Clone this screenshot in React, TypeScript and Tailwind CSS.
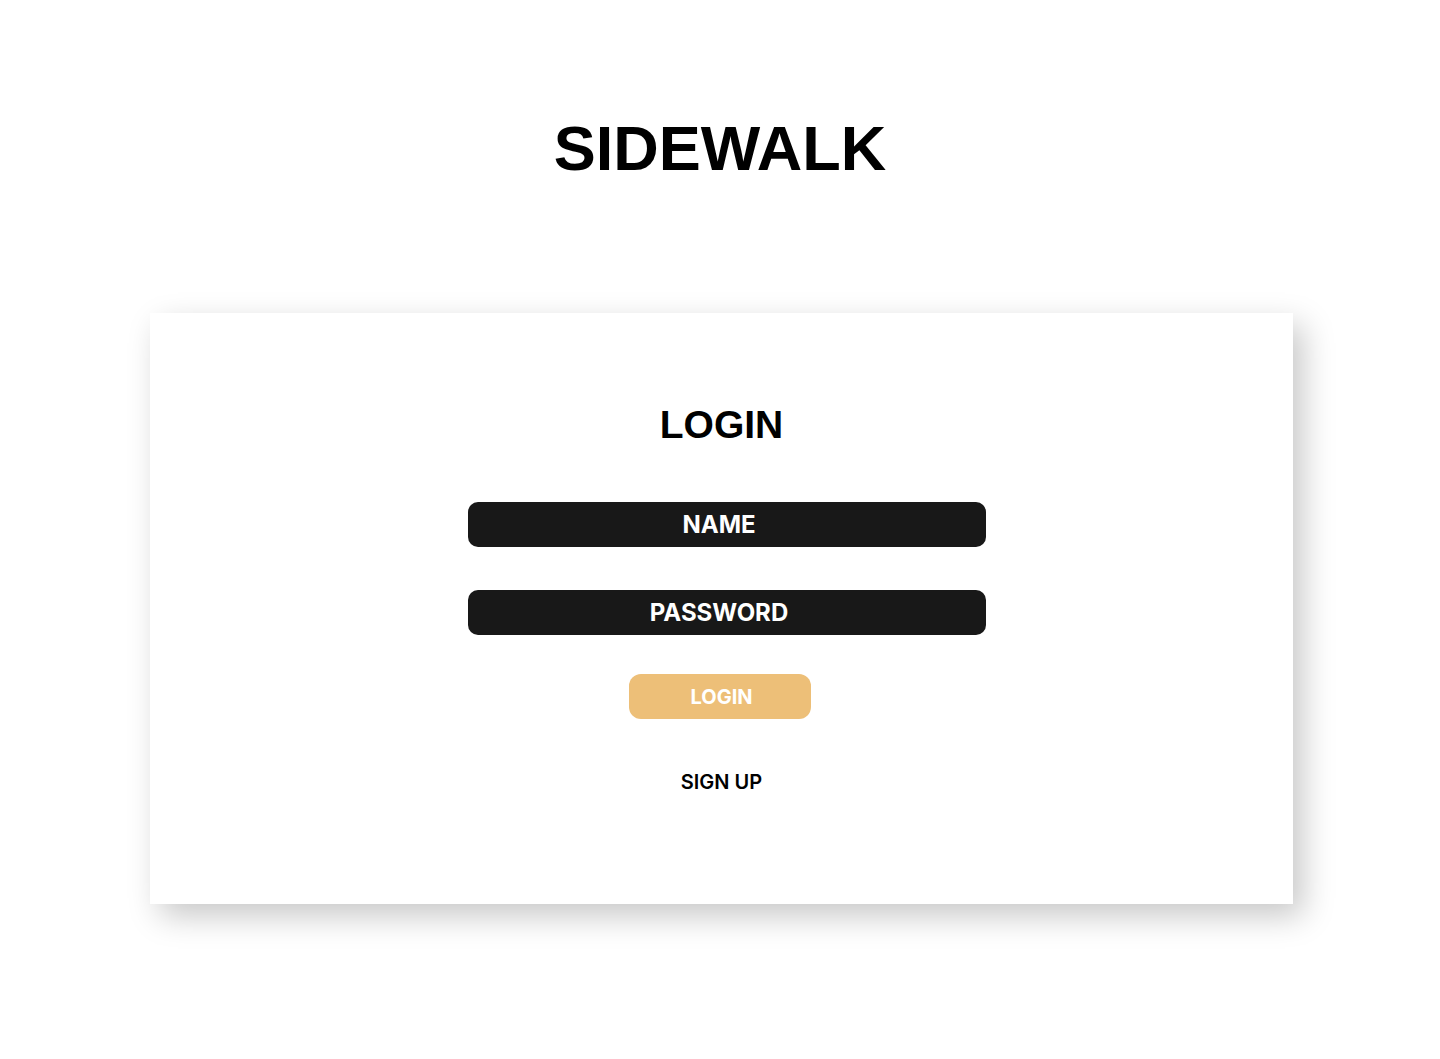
// Sidewalk login screen — big wordmark on top, a white card with a soft
// bottom-right shadow holding the login form.

const inter = "font-['Inter',sans-serif]";
const arial = "font-['Liberation_Sans',Arial,sans-serif]";

function Field({ placeholder, type = "text" }: { placeholder: string; type?: string }) {
  return (
    <input
      type={type}
      placeholder={placeholder}
      className={`${inter} ml-[11px] h-[45px] w-[518px] rounded-[10px] bg-[#181818] pr-[16px] text-center text-[24px] font-bold text-white outline-none placeholder:text-white`}
    />
  );
}

export default function App() {
  return (
    <div className="min-h-[1059px] w-full bg-white">
      <h1
        className={`${arial} pt-[117px] text-center text-[63px] font-bold leading-none text-black`}
      >
        SIDEWALK
      </h1>

      <div className="ml-[150px] mt-[133px] flex h-[591px] w-[1143px] flex-col items-center bg-white pt-[92px] shadow-[10px_12px_30px_rgba(0,0,0,0.22)]">
        <h2 className={`${arial} text-[39px] font-bold leading-none text-black`}>
          LOGIN
        </h2>

        <div className="mt-[58px] flex flex-col items-center gap-[43px]">
          <Field placeholder="NAME" />
          <Field placeholder="PASSWORD" type="password" />
        </div>

        <button
          type="button"
          className={`${inter} mr-[4px] mt-[39px] h-[45px] w-[182px] rounded-[12px] bg-[#edbf78] pl-[4px] text-[20px] font-bold text-white`}
        >
          LOGIN
        </button>

        <button
          type="button"
          className={`${inter} mt-[53px] text-[20px] font-semibold leading-none text-black`}
        >
          SIGN UP
        </button>
      </div>
    </div>
  );
}
